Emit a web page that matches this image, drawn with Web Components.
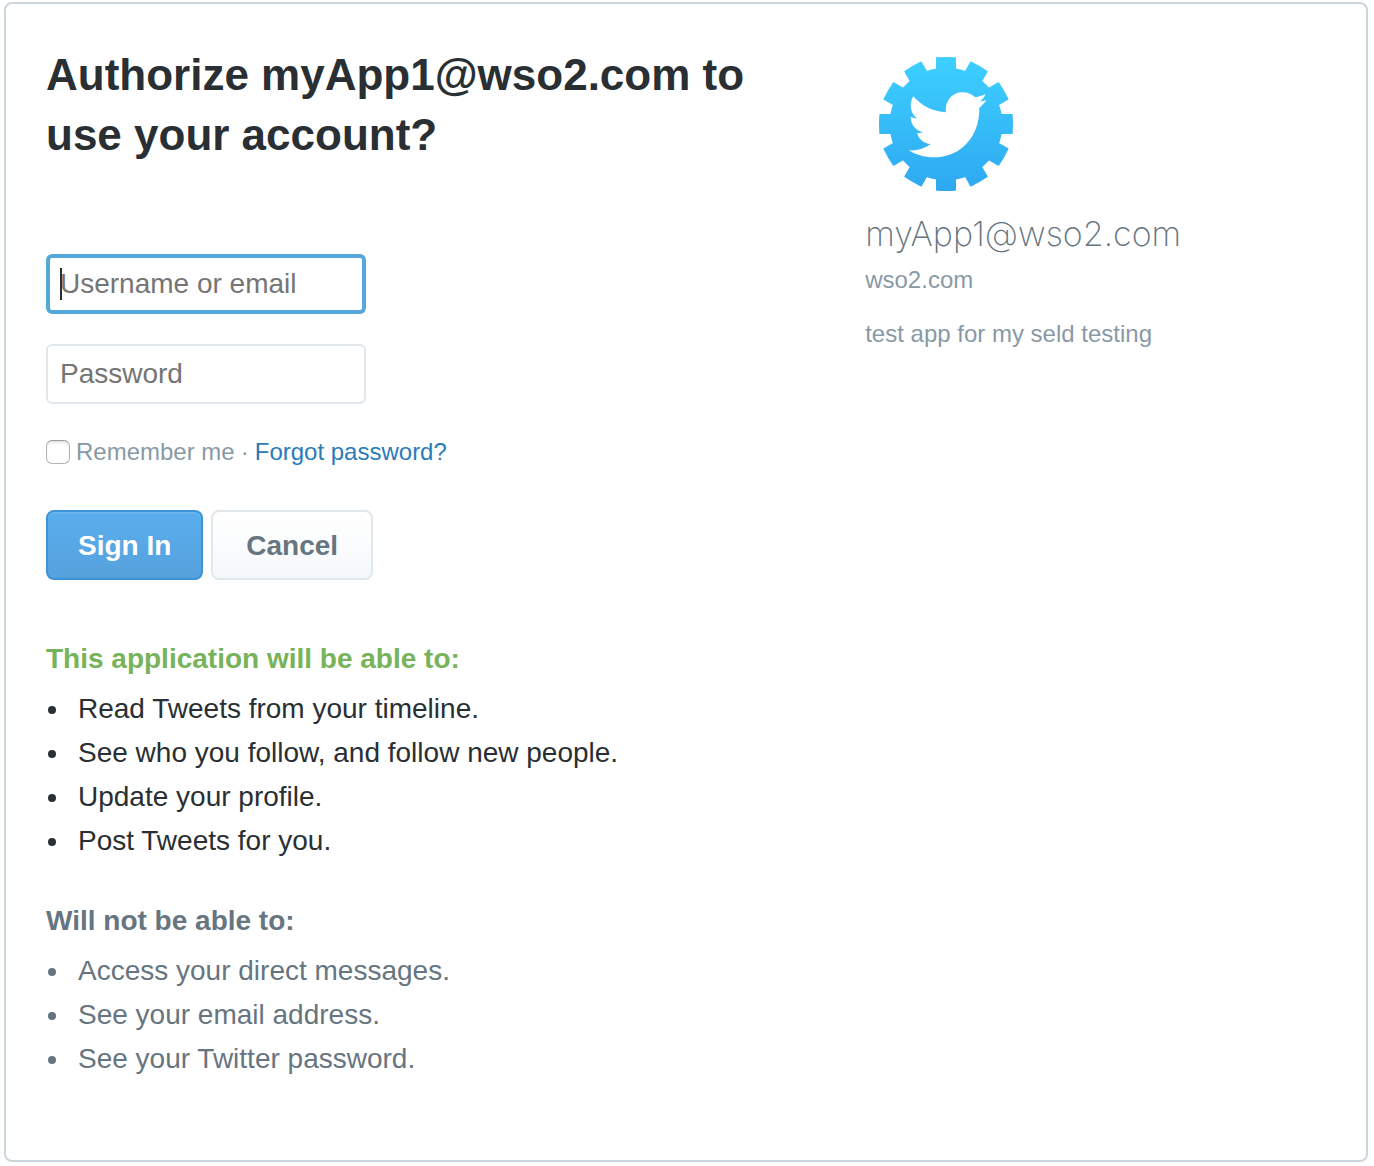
<!DOCTYPE html>
<html lang="en">
<head>
<meta charset="utf-8">
<title>Authorize application</title>
<style>
  body { margin: 2px 6px 4px 4px; background: #fff; color: #292f33; font: 28px/44px "Liberation Sans", Arial, sans-serif; }
</style>
</head>
<body>
<auth-card>
  <sign-in-form slot="main">Authorize myApp1@wso2.com to use your account?</sign-in-form>
  <permission-list slot="main" kind="allowed">
    <span slot="title">This application will be able to:</span>
    <permission-item>Read Tweets from your timeline.</permission-item>
    <permission-item>See who you follow, and follow new people.</permission-item>
    <permission-item>Update your profile.</permission-item>
    <permission-item>Post Tweets for you.</permission-item>
  </permission-list>
  <permission-list slot="main" kind="denied">
    <span slot="title">Will not be able to:</span>
    <permission-item>Access your direct messages.</permission-item>
    <permission-item>See your email address.</permission-item>
    <permission-item>See your Twitter password.</permission-item>
  </permission-list>
  <app-info slot="aside">
    <span slot="name">myApp1@wso2.com</span>
    <span slot="site">wso2.com</span>
    <span slot="about">test app for my seld testing</span>
  </app-info>
</auth-card>
<script>
function define(name, html) {
  const template = document.createElement('template');
  template.innerHTML = html;
  customElements.define(name, class extends HTMLElement {
    constructor() {
      super();
      this.attachShadow({ mode: 'open' }).append(template.content.cloneNode(true));
    }
  });
}

define('auth-card', `
  <style>
    :host { display: grid; grid-template-columns: 16fr 9fr; box-sizing: border-box; min-height: 1160px; padding: 40px; border: 2px solid #ccd6dd; border-radius: 8px; }
    main { padding-right: 40px; }
  </style>
  <main><slot name="main"></slot></main>
  <aside><slot name="aside"></slot></aside>`);

define('sign-in-form', `
  <style>
    :host { display: block; }
    h1 { margin: 0; padding: 1px 0 89px; font-size: 44px; line-height: 60px; font-weight: bold; }
    form { display: flex; flex-direction: column; align-items: flex-start; }
    .field { display: block; box-sizing: border-box; width: 320px; height: 60px; margin: 0 0 30px; padding: 0 12px; border: 2px solid #e1e8ed; border-radius: 6px; font: inherit; color: #292f33; background: #fff; outline: none; }
    .field::placeholder { color: #757575; opacity: 1; }
    .field.current { border: 4px solid #56a8db; padding: 0 10px; background: linear-gradient(#292f33, #292f33) 10px center / 2px 32px no-repeat #fff; }
    .options { display: flex; align-items: center; gap: 6px; height: 36px; font-size: 24px; color: #8899a6; }
    .check { appearance: none; box-sizing: border-box; width: 24px; height: 24px; margin: 0; border: 1px solid #b4b4b4; border-top-color: #9c9c9c; border-radius: 6px; background: #fff; box-shadow: inset 0 2px 2px #e6e6e6; }
    a { color: #2b7bb9; text-decoration: none; }
    .actions { display: flex; gap: 8px; margin: 40px 0 57px; }
    button { box-sizing: border-box; height: 70px; padding: 2px 33px 0; border: 2px solid #e1e8ed; border-radius: 8px; font: bold 28px "Liberation Sans", Arial, sans-serif; color: #66757f; background: linear-gradient(#fff, #f5f8fa); }
    .primary { padding: 2px 30px 0; color: #fff; border-color: #3b94d9; background: linear-gradient(#5aaeee, #55a1dc); box-shadow: inset 0 2px 0 #6bb5ed; }
  </style>
  <h1><slot></slot></h1>
  <form>
    <input class="field current" type="text" placeholder="Username or email" aria-label="Username or email">
    <input class="field" type="password" placeholder="Password" aria-label="Password">
    <div class="options">
      <input class="check" type="checkbox" id="remember"><label for="remember">Remember me</label><span>·</span><a href="#forgot">Forgot password?</a>
    </div>
    <div class="actions"><button type="button" class="primary">Sign In</button><button type="button">Cancel</button></div>
  </form>`);

define('permission-list', `
  <style>
    :host { display: block; margin-bottom: 36px; color: #66757f; }
    h2 { margin: 0 0 6px; font-size: 28px; line-height: 44px; font-weight: bold; }
    :host([kind="allowed"]) { color: #292f33; }
    :host([kind="allowed"]) h2 { color: #77b35a; }
  </style>
  <h2><slot name="title"></slot></h2>
  <div role="list"><slot></slot></div>`);

define('permission-item', `
  <style>
    :host { display: flex; align-items: center; gap: 22px; padding-left: 2px; line-height: 44px; }
    i { width: 8px; height: 8px; margin-top: 2px; border-radius: 50%; background: currentColor; }
  </style>
  <i></i><span role="listitem"><slot></slot></span>`);

define('app-info', `
  <style>
    :host { display: block; color: #8899a6; font-size: 24px; line-height: 36px; }
    svg { display: block; width: 160px; height: 160px; }
    h2 { margin: 8px 0 6px; font: 200 34px/44px Inter, "Liberation Sans", sans-serif; color: #66757f; }
    p { margin: 0 0 18px; }
  </style>
  <svg viewBox="15 11 480 480" aria-hidden="true">
    <defs>
      <linearGradient id="sky" x1="0" y1="0" x2="0" y2="1"><stop offset="0" stop-color="#3dd0ff"/><stop offset="1" stop-color="#2ea8f1"/></linearGradient>
      <mask id="gear" maskUnits="userSpaceOnUse" x="50" y="45" width="420" height="412">
        <g fill="#fff" stroke="#fff" stroke-width="4" stroke-linejoin="round">
          <circle cx="258" cy="251" r="167"/>
          <path id="bar" d="M230 53Q258 51 286 53V449Q258 451 230 449Z"/>
          <use href="#bar" transform="rotate(30 258 251)"/><use href="#bar" transform="rotate(60 258 251)"/><use href="#bar" transform="rotate(90 258 251)"/><use href="#bar" transform="rotate(120 258 251)"/><use href="#bar" transform="rotate(150 258 251)"/>
        </g>
      </mask>
    </defs>
    <rect x="56" y="49" width="404" height="404" fill="url(#sky)" mask="url(#gear)"/>
    <path fill="#fff" d="M160 168C185 198 220 213 258 216C254 180 278 156 308 156C324 156 336 162 346 171C356 169 366 166 377 161C373 171 367 178 359 184C367 183 372 181 379 179C374 188 366 195 358 202C360 280 310 351 220 351C192 351 167 343 146 330C171 332 193 325 212 311C192 310 176 296 171 277C177 278 183 278 189 276C167 271 152 252 152 229C159 232 165 234 171 234C150 219 147 190 160 168Z"/>
  </svg>
  <h2><slot name="name"></slot></h2>
  <p><slot name="site"></slot></p>
  <p><slot name="about"></slot></p>`);
</script>
</body>
</html>
